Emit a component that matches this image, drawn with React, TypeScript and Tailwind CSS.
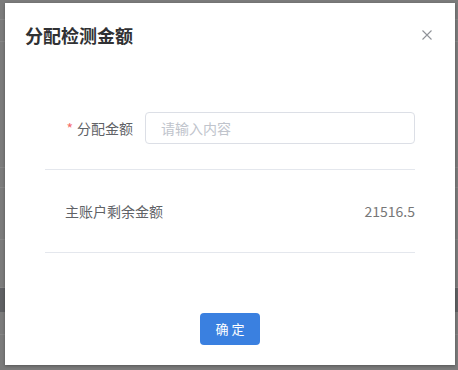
import { useState } from "react";

const cjk = { fontFamily: '"Noto Sans CJK SC", "Noto Sans", sans-serif' };

// faint rows of the page that sits behind the mask
const BackdropPage = () => (
  <div className="flex flex-col h-full">
    <div className="h-[20px] border-b border-[#868686]" />
    <div className="h-[22px] border-b border-[#868686]" />
    <div className="h-[126px] border-b border-[#858585]" />
    <div className="h-[20px] border-b border-[#858585]" />
    <div className="h-[52px] border-b border-[#858585]" />
    <div className="h-[48px] border-b border-[#858585]" />
    <div className="h-[24px] bg-[#5f6063]" />
    <div className="h-[23px] border-b border-[#858585]" />
    <div className="flex-1" />
  </div>
);

const App = () => {
  const [amount, setAmount] = useState("");

  return (
    <div className="relative w-[458px] h-[370px] overflow-hidden bg-[#7b7b7b]" style={cjk}>
      <BackdropPage />

      {/* Dialog */}
      <div className="absolute left-[5px] top-[3px] w-[450px] bg-white shadow-[0_1px_3px_rgba(0,0,0,0.3)]">
        {/* Header */}
        <div className="flex items-center justify-between px-5 pt-5 pb-[10px]">
          <span className="text-[18px] leading-6 font-bold text-[#303133]">分配检测金额</span>
          <button className="w-4 h-4 flex items-center justify-center text-[#909399]">
            <svg width="10" height="10" viewBox="0 0 10 10">
              <path d="M0.5 0.5 L9.5 9.5 M9.5 0.5 L0.5 9.5" stroke="currentColor" strokeWidth="1.1" />
            </svg>
          </button>
        </div>

        {/* Body */}
        <div className="px-10 pt-[55px]">
          <div className="flex items-center h-8">
            <label className="w-[100px] pr-3 text-right text-sm text-[#606266]">
              <span className="text-[#f56c6c] mr-1">*</span>分配金额
            </label>
            <input
              type="text"
              value={amount}
              onChange={(e) => setAmount(e.target.value)}
              placeholder="请输入内容"
              className="flex-1 h-8 px-[15px] text-sm rounded border border-[#dcdfe6] outline-none text-[#606266] placeholder-[#c0c4cc]"
            />
          </div>

          <div className="mt-[25px] border-t border-[#e4e7ed]" />
          <div className="h-[82px] flex items-center justify-between pl-5 text-sm text-[#606266]">
            <span>主账户剩余金额</span>
            <span className="text-[#777]">21516.5</span>
          </div>
          <div className="border-t border-[#e4e7ed]" />
        </div>

        {/* Footer */}
        <div className="flex justify-center pt-[60px] pb-5">
          <button className="w-[60px] h-8 rounded bg-[#3a80e0] text-white text-[13px]">确 定</button>
        </div>
      </div>
    </div>
  );
};

export default App;
